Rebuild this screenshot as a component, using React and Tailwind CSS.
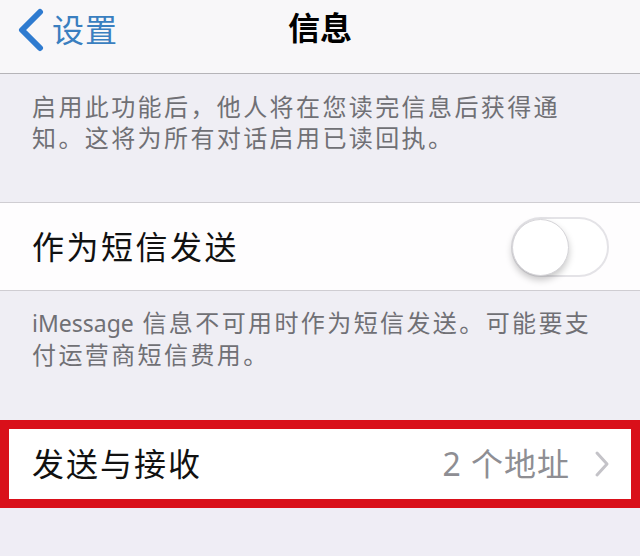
export default function App() {
  const font = { fontFamily: '"Noto Sans", "Noto Sans CJK SC", sans-serif' };
  return (
    <div className="w-[640px] h-[556px] overflow-hidden bg-[#efeef4] flex flex-col" style={font}>
      {/* nav bar */}
      <div className="h-[74px] shrink-0 bg-[#f8f7f9] border-b border-[#b5b4b8] relative">
        <div className="absolute left-[14px] top-[8px] flex items-center">
          <svg width="32" height="44" viewBox="0 0 32 44">
            <path d="M26 4 L8 22 L26 40" fill="none" stroke="#2f7bd0" strokeWidth="6" strokeLinecap="round" strokeLinejoin="round" />
          </svg>
          <span className="ml-[6px] text-[32px] leading-none text-[#3a7fc0] tracking-[1px]">设置</span>
        </div>
        <div className="absolute left-0 right-0 top-[12px] text-center text-[32px] leading-none font-semibold text-black">信息</div>
      </div>

      {/* footer text 1 */}
      <div className="h-[128px] shrink-0 pl-[32px] pt-[17px] text-[24px] leading-[31px] text-[#707075] tracking-[2.4px]">
        启用此功能后，他人将在您读完信息后获得通<br />知。这将为所有对话启用已读回执。
      </div>

      {/* toggle row */}
      <div className="h-[89px] shrink-0 bg-[#fefdfe] border-y border-[#cfcdd2] flex items-center justify-between pl-[32px] pr-[31px]">
        <span className="text-[32px] leading-none text-[#111] tracking-[2.5px]">作为短信发送</span>
        <div className="w-[98px] h-[60px] rounded-full border-2 border-[#e4e3e7] bg-white relative">
          <div className="absolute left-[-1px] top-0 w-[57px] h-[57px] rounded-full bg-white border border-[#d6d5d9] shadow-[0_4px_7px_rgba(0,0,0,0.22)]" />
        </div>
      </div>

      {/* footer text 2 */}
      <div className="h-[129px] shrink-0 pl-[32px] pt-[16px] text-[24px] leading-[31px] text-[#707075] tracking-[2.4px]">
        <span className="text-[23px] tracking-normal">iMessage</span> 信息不可用时作为短信发送。可能要支<br />付运营商短信费用。
      </div>

      {/* send & receive row, highlighted */}
      <div className="h-[88px] shrink-0 bg-white border-[9px] border-[#d9101a] flex items-center justify-between pl-[23px] pr-[21px]">
        <span className="text-[32px] leading-none text-[#111] tracking-[2px]">发送与接收</span>
        <div className="flex items-center">
          <span className="text-[32px] leading-none text-[#8e8e93] tracking-[1px]">2 个地址</span>
          <svg width="16" height="28" viewBox="0 0 16 28" className="ml-[24px]">
            <path d="M3 3 L13 14 L3 25" fill="none" stroke="#c4c3c8" strokeWidth="3" strokeLinecap="round" strokeLinejoin="round" />
          </svg>
        </div>
      </div>

      <div className="flex-1 bg-[#efedf5]" />
    </div>
  );
}
